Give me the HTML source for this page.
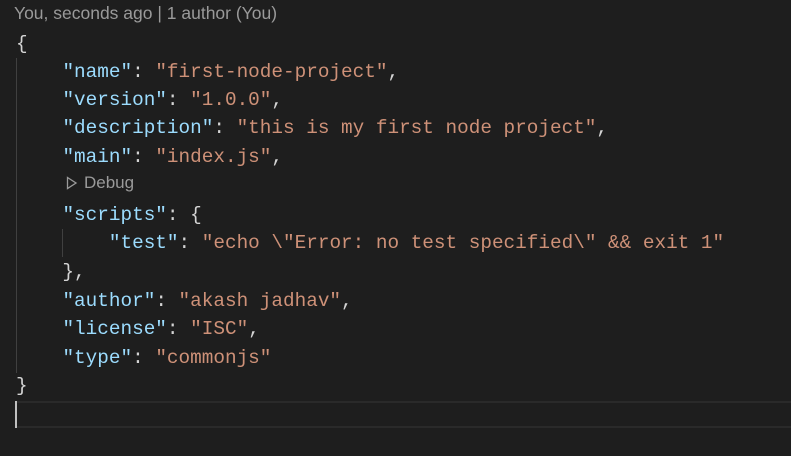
<!DOCTYPE html>
<html><head><style>
body{margin:0;width:791px;height:456px;background:#1e1e1e;overflow:hidden;position:relative;font-family:"Liberation Mono",monospace;font-size:19.35px;color:#d4d4d4}
.l{position:absolute;left:16px;white-space:pre;line-height:28px;height:28px}
.k{color:#9cdcfe}.s{color:#ce9178}
.g{position:absolute;width:1px;background:#404040}
</style></head><body>
<div style="position:absolute;left:14px;top:3px;font-family:'Liberation Sans',sans-serif;font-size:17.5px;color:#9a9a9a;white-space:pre">You, seconds ago | 1 author (You)</div>
<div class="g" style="left:16px;top:58px;height:315px"></div>
<div class="g" style="left:62px;top:229px;height:28px"></div>
<div class="l" style="top:30px">{</div>
<div class="l" style="top:58px">    <span class="k">"name"</span>: <span class="s">"first-node-project"</span>,</div>
<div class="l" style="top:86px">    <span class="k">"version"</span>: <span class="s">"1.0.0"</span>,</div>
<div class="l" style="top:114px">    <span class="k">"description"</span>: <span class="s">"this is my first node project"</span>,</div>
<div class="l" style="top:143px">    <span class="k">"main"</span>: <span class="s">"index.js"</span>,</div>
<div style="position:absolute;left:66px;top:173px;font-family:'Liberation Sans',sans-serif;font-size:17px;color:#9a9a9a;white-space:pre"><svg width="12" height="14" style="vertical-align:-2px;margin-right:6px"><path d="M1.5 1.5 L10 7 L1.5 12.5 Z" fill="none" stroke="#9a9a9a" stroke-width="1.3"/></svg>Debug</div>
<div class="l" style="top:201px">    <span class="k">"scripts"</span>: {</div>
<div class="l" style="top:229px">        <span class="k">"test"</span>: <span class="s">"echo \"Error: no test specified\" &amp;&amp; exit 1"</span></div>
<div class="l" style="top:258px">    },</div>
<div class="l" style="top:287px">    <span class="k">"author"</span>: <span class="s">"akash jadhav"</span>,</div>
<div class="l" style="top:315px">    <span class="k">"license"</span>: <span class="s">"ISC"</span>,</div>
<div class="l" style="top:344px">    <span class="k">"type"</span>: <span class="s">"commonjs"</span></div>
<div class="l" style="top:372px">}</div>
<div style="position:absolute;left:16px;right:0;top:401px;height:23px;border-top:2px solid #2a2a2a;border-bottom:2px solid #2a2a2a"></div>
<div style="position:absolute;left:15px;top:401px;width:2px;height:27px;background:#c0c0c0"></div>
</body></html>
